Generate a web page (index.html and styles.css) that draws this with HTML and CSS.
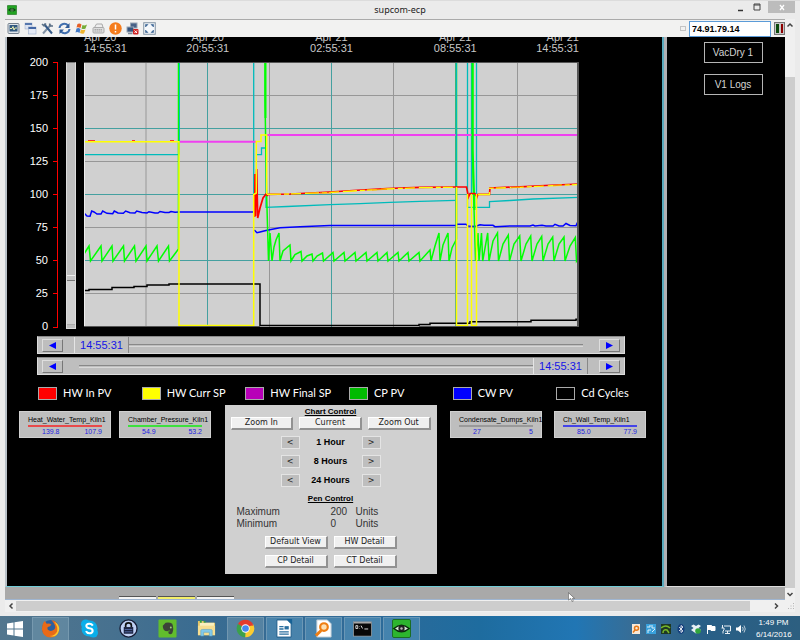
FILE: index.html
```html
<!DOCTYPE html>
<html lang="en">
<head>
<meta charset="utf-8">
<title>supcom-ecp</title>
<link rel="stylesheet" href="styles.css">
</head>
<body>
<div class="window">
  <header class="titlebar">
    <svg class="app-icon" viewBox="0 0 20 20"><rect x=".5" y=".5" width="19" height="19" rx="2" fill="#22a322" stroke="#2a5f2a"/><path d="M2 10Q10 2 18 10Q10 17 2 10Z" fill="#0d3d12"/><circle cx="10" cy="10" r="3" fill="#6dbb6d"/><circle cx="10" cy="10" r="1.3"/></svg>
    <h1>supcom-ecp</h1>
    <div class="window-buttons">
      <button aria-label="Minimize"><svg viewBox="0 0 10 10"><path d="M2 8.500H7" stroke="#333" stroke-width="1.500"/></svg></button>
      <button aria-label="Maximize"><svg viewBox="0 0 10 10"><path d="M2 2H8V8H2ZM2 3H8" fill="none" stroke="#444"/></svg></button>
      <button class="close" aria-label="Close"><svg viewBox="0 0 10 10"><path d="M3 3L7 8M7 3L3 8" stroke="#fff" stroke-width="1.300"/></svg></button>
    </div>
  </header>

  <div class="viewport">
    <main class="client">
      <div class="toolbar">
        <button aria-label="Monitor"><svg viewBox="0 0 26 26"><rect x="2" y="3" width="22" height="20" rx="2" fill="#dfe5ea" stroke="#75818e" stroke-width="2"/><rect x="5" y="6" width="16" height="13" fill="#31587f"/><path d="M6 13H10L12 9L14 16L16 12H20" fill="none" stroke="#e8edb0" stroke-width="2"/></svg></button>
        <button aria-label="Windows"><svg viewBox="0 0 26 26"><rect x="2" y="2" width="14" height="12" fill="#dbe3f1" stroke="#9aabc9"/><path d="M2 4H16" stroke="#5677ad" stroke-width="4"/><rect x="9" y="10" width="15" height="14" fill="#e5eaf5" stroke="#8ba0c4"/><path d="M9 12H24" stroke="#4569a5" stroke-width="4"/></svg></button>
        <button aria-label="Tools"><svg viewBox="0 0 26 26"><path d="M4 23L20 5" stroke="#8393a5" stroke-width="4"/><path d="M6 4L22 23" stroke="#355a88" stroke-width="4"/><path d="M2 4L6 8L10 3M17 3L18 8L24 8" fill="none" stroke="#5d7287" stroke-width="3"/></svg></button>
        <button aria-label="Refresh"><svg viewBox="0 0 26 26"><path d="M3 12C4 3 15 1 20 7M23 14C22 23 11 25 6 19" fill="none" stroke="#416fae" stroke-width="4"/><path d="M23 2V12H14ZM3 24V15H12Z" fill="#305b96"/></svg></button>
        <button aria-label="Start menu"><svg viewBox="0 0 26 26"><path d="M5 4Q9 2 13 5L11 12Q7 10 3 11Z" fill="#e55f26"/><path d="M15 6Q19 8 24 5L21 13Q17 15 13 13Z" fill="#76ac37"/><path d="M3 13Q7 11 11 14L9 22Q5 19 1 21Z" fill="#4279c5"/><path d="M12 15Q16 17 21 15L18 23Q14 24 10 22Z" fill="#eeb52e"/></svg></button>
        <button aria-label="Keyboard"><svg viewBox="0 0 26 26"><path d="M5 11L9 4H20L22 11" fill="#eee" stroke="#aaa" stroke-width="2"/><rect x="2" y="11" width="22" height="11" rx="2" fill="#ddd" stroke="#aaa" stroke-width="2"/><path d="M5 15H21M5 18H21" stroke="#aaa" stroke-width="2" stroke-dasharray="3 1"/></svg></button>
        <button aria-label="Alert"><svg viewBox="0 0 26 26"><circle cx="13" cy="13" r="12.500" fill="#f57c1c"/><path d="M13 5V15M13 18V21" stroke="#fff" stroke-width="3"/></svg></button>
        <button aria-label="Disconnect"><svg viewBox="0 0 26 26"><rect x="9" y="2" width="13" height="10" fill="#476187" stroke="#9aa6b5" stroke-width="2"/><rect x="2" y="10" width="13" height="10" fill="#36547e" stroke="#9aa6b5" stroke-width="2"/><path d="M4 23H13" stroke="#7c8999" stroke-width="3"/><rect x="14" y="14" width="11" height="11" rx="2" fill="#d02424"/><path d="M17 17L22 22M22 17L17 22" stroke="#fff" stroke-width="2"/></svg></button>
        <button aria-label="Full screen"><svg viewBox="0 0 26 26"><rect x="1.500" y="1.500" width="23" height="23" fill="#f5f8fb" stroke="#8192a2" stroke-width="2"/><path d="M5 5H10L5 10ZM21 5V10L16 5ZM5 21V16L10 21ZM21 21H16L21 16Z" fill="#315c8e" stroke="#315c8e"/></svg></button>
        <div class="address">
          <i class="grip"></i>
          <input type="text" value="74.91.79.14" aria-label="Address">
          <span class="status"><i></i><i class="off"></i></span>
        </div>
      </div>

      <div class="panes">
        <section class="chart-pane">
          <div class="time-axis">
            <span>Apr 20<br>14:55:31</span><span>Apr 20<br>20:55:31</span><span>Apr 21<br>02:55:31</span><span>Apr 21<br>08:55:31</span><span>Apr 21<br>14:55:31</span>
          </div>
          <div class="chart">
            <div class="value-axis">
              <div class="values"><span>200</span><span>175</span><span>150</span><span>125</span><span>100</span><span>75</span><span>50</span><span>25</span><span>0</span></div>
              <svg class="ticks" viewBox="0 0 9 266"><path d="M4 0H9V266H4V265H8V232H4V231H8V199H4V198H8V166H4V165H8V133H4V132H8V100H4V99H8V67H4V66H8V34H4V33H8V1H4Z" fill="#f00"/></svg>
            </div>
            <input class="range-y" type="range" min="0" max="100" value="82" aria-label="Value range">
            <svg class="plot" viewBox="84 62 495 265" preserveAspectRatio="none" role="img" aria-label="Kiln trend chart">
              <rect x="84" y="62" width="495" height="265" fill="#d0d0d0"/>
              <path d="M146 62V327" stroke="#b4b4b4" stroke-width="2"/>
              <path d="M269.500 62V327M393.500 62V327M517.500 62V327M84 95.500H579M84 161.500H579M84 227.500H579M84 293.500H579" stroke="#979797"/>
              <path d="M207.500 62V327M331.500 62V327M455.500 62V327M84 128.500H579M84 194.500H579M84 260.500H579" stroke="#45a0a0"/>
              <g fill="none">
                <path stroke="#000" stroke-width="1.500" d="M84 290.500H89V289.500H112V287.500H134V286.500H147V285H169V284H260V326M260 325.500H419V324.500H430V323.300H470V321.700H531V320.300H576V319.300H579"/>
                <path stroke="#0bb" stroke-width="1.300" d="M84 154.700H179.500M253.700 62V207M256 154.700H261.500V148H266V207.300L287 206.500L330 204.700L360 203.600L390 202.300L420 201.300L456 200.300M467.500 62V207.300M471.500 62V194M476.500 62V207M468 207.300H489.500V201.700L510 200.500L533 199L579 197.300"/>
                <path stroke="#f040f0" stroke-width="2" d="M179 141.700H256M267 135H579"/>
                <path stroke="#00f" stroke-width="1.500" d="M84 213L87 216L90 216.300L91.700 211L94 212L97 214H101L102.700 211L107 213.300L112.700 213.700L114.300 211L118 213L123.300 213.300L125.700 211L130 212.700L135 213L136.700 211L142 212.500L147 213L149 211.700L155 213H158L160 211.500L165 212.500H169L171 211.500L175 212.300L179 212H254M254.300 230L257 232.700L260 232L267 230.300L280 227.700L300 226.700L330 225.600H456L457 224.300H466L468 226L475 226.500L480 224.700L484 225.300H493L495 226.700L510 226L530 226L533 225L535 226L542 225.300L546 226H553L555 224.300L559 226H563L566 223.500L570 225.500L576 225.700L577 223.500L579 225"/>
                <path stroke="#0f0" stroke-width="1.500" d="M84 254L89 246L90.500 261L101 246L102 261L112 246L113 261L123.500 246L124.500 261L134.500 246L136 261L146 246L147 261L157 246L158.500 261L168.500 246L169.500 261L174 255L178.500 249V62M265 62V100L266.500 190L268.500 261L270 233L272 261L274 247L276 240L279 233L280 261L283 251L290 245L291 261L295 254.500L301 251.500L302 261L307 256L312 254L313 261L317 256L322.500 253L323.500 261L333 252.500L334 261L344 252.500L345 261L355 252.500L356 261L366 252.500L367 261L377 252.500L378 261L387 252.500L388 261L398 252.500L399 261L408 252.500L409 261L419 252.500L420 261L430 250L431 261L435 246L439 233L440 261L443 245L448 233L449 261L452 248L456.500 239V62M472.500 62V155L475.500 261L478 233L479 261L481.500 233L482.700 261L487.700 233L489 261L493 241L497.500 233L498.500 261L503 244L508.300 235L509.500 261L514 244L519.700 236L521 261L526 244L530.700 236L532 261L537 244L541.700 236.500L543 261L548 244L552.700 237L554 261L559 244L564 237L565 261L570 246L575.300 237.500L576.500 261L579 257"/>
                <path stroke="#0bb" d="M179.500 62V154M456.500 62V200"/>
                <path stroke="#0f0" stroke-width="2" d="M265.500 62V118M472.700 62V150L474.500 210"/>
                <path stroke="#f00" stroke-width="1.700" d="M88 141H95M132 141H135M170 141H174M254.700 217L255 174L255.500 216L256.700 169L257.700 218L260 208L263 198L266 194L268 196M267 194.300L290 194L330 192L353 190.500L387 188.500L420 187.300L456 187H466.500L468.500 197L470 193.500H475L477 197L478 194.300H489.500L490 188L520 186.800L545 185.500L579 184"/>
                <path stroke="#ff0" stroke-width="1.500" d="M84 141.700H179V325.500H253.700V194.500L256.300 193V141.500H261V135H266.700V194.300M456.500 187V325.500H467.500V194M471.500 194V325.500H476.500V194"/>
                <path stroke="#ff0" stroke-width="1.300" stroke-dasharray="14 3 5 2 10 4" d="M267 194.300L290 194L330 192.500L353 191L387 189L420 187.700L456 187.300M478 194.500H489.500V188.300L520 187.300L545 186L579 184.500"/>
                <path stroke="#ff9800" d="M372 190L387 189.300M511 187.500L520 187.300M553 185.700L562 185.200M320 193H331"/>
                <path stroke="#eee" d="M84.500 62V327"/>
                <path stroke="#555" d="M84 62.500H579M84 326.500H260M419 326.500H579"/>
                <path stroke="#555" stroke-width="2" d="M578 62V327"/>
              </g>
            </svg>
          </div>

          <div class="sliders">
            <div class="time-slider">
              <button aria-label="Start earlier"><svg viewBox="0 0 8 8"><path d="M8 0V8L0 4Z" fill="#00f"/></svg></button>
              <div class="track"><input type="range" value="0" id="start" aria-label="Start time"><output for="start">14:55:31</output></div>
              <button aria-label="Start later"><svg viewBox="0 0 8 8"><path d="M0 0V8L8 4Z" fill="#00f"/></svg></button>
            </div>
            <div class="time-slider">
              <button aria-label="End earlier"><svg viewBox="0 0 8 8"><path d="M8 0V8L0 4Z" fill="#00f"/></svg></button>
              <div class="track"><input type="range" value="100" id="end" aria-label="End time"><output class="at-end" for="end">14:55:31</output></div>
              <button aria-label="End later"><svg viewBox="0 0 8 8"><path d="M0 0V8L8 4Z" fill="#00f"/></svg></button>
            </div>
          </div>

          <ul class="legend">
            <li><i class="red"></i>HW In PV</li><li><i class="yellow"></i>HW Curr SP</li><li><i class="purple"></i>HW Final SP</li><li><i class="green"></i>CP PV</li><li><i class="blue"></i>CW PV</li><li><i></i>Cd Cycles</li>
          </ul>

          <div class="lower">
            <div class="sensors">
              <div class="sensor red-line"><h3>Heat_Water_Temp_Kiln1</h3><p><span>139.8</span><span>107.9</span></p></div>
              <div class="sensor green-line"><h3>Chamber_Pressure_Kiln1</h3><p><span>54.9</span><span>53.2</span></p></div>
            </div>
            <section class="control">
              <h2>Chart Control</h2>
              <div class="zoom-row"><button>Zoom In</button><button>Current</button><button>Zoom Out</button></div>
              <div class="steps">
                <button aria-label="Back 1 hour">&lt;</button><b>1 Hour</b><button aria-label="Forward 1 hour">&gt;</button>
                <button aria-label="Back 8 hours">&lt;</button><b>8 Hours</b><button aria-label="Forward 8 hours">&gt;</button>
                <button aria-label="Back 24 hours">&lt;</button><b>24 Hours</b><button aria-label="Forward 24 hours">&gt;</button>
              </div>
              <h2>Pen Control</h2>
              <div class="limits"><span>Maximum</span><span>200</span><span>Units</span><span>Minimum</span><span>0</span><span>Units</span></div>
              <div class="views"><button>Default View</button><button>HW Detail</button><button>CP Detail</button><button>CT Detail</button></div>
            </section>
            <div class="sensors right">
              <div class="sensor gray-line"><h3>Condensate_Dumps_Kiln1</h3><p><span>27</span><span>5</span></p></div>
              <div class="sensor blue-line"><h3>Ch_Wall_Temp_Kiln1</h3><p><span>85.0</span><span>77.9</span></p></div>
            </div>
          </div>
        </section>
        <aside class="side-pane"><button>VacDry 1</button><button>V1 Logs</button></aside>
      </div>
      <div class="strip"><i></i><i class="lit"></i><i></i></div>
    </main>
    <div class="scroll-y">
      <button aria-label="Scroll up"><svg viewBox="0 0 8 8"><path d="M1.500 5.500L4 3L6.500 5.500" fill="none" stroke="#444" stroke-width="1.500"/></svg></button>
      <i></i>
      <button aria-label="Scroll down"><svg viewBox="0 0 8 8"><path d="M1.500 3L4 5.500L6.500 3" fill="none" stroke="#444" stroke-width="1.500"/></svg></button>
    </div>
  </div>
  <div class="scroll-x">
    <button aria-label="Scroll left"><svg viewBox="0 0 8 8"><path d="M5.500 1.500L3 4L5.500 6.500" fill="none" stroke="#444" stroke-width="1.500"/></svg></button>
    <i></i>
    <button aria-label="Scroll right"><svg viewBox="0 0 8 8"><path d="M3 1.500L5.500 4L3 6.500" fill="none" stroke="#444" stroke-width="1.500"/></svg></button>
    <svg class="corner" viewBox="0 0 8 8"><path d="M6 1H7V2H6ZM3.500 3.500H4.500V4.500H3.500ZM6 3.500H7V4.500H6ZM1 6H2V7H1ZM3.500 6H4.500V7H3.500ZM6 6H7V7H6Z" fill="#b5b5b5"/></svg>
  </div>
  <svg class="pointer" viewBox="0 0 8 12"><path d="M.5 .5V9L3 7L5 11L6 10L5 7H7.500Z" fill="#fff" stroke="#444" stroke-width=".6"/></svg>
</div>

<footer class="taskbar">
  <button class="start" aria-label="Start"><svg viewBox="0 0 16 16"><path d="M0 2.500L6.500 1.500V7.500H0ZM7.500 1.300L16 0V7.500H7.500ZM0 8.500H6.500V14.500L0 13.500ZM7.500 8.500H16V16L7.500 14.700Z" fill="#fff"/></svg></button>
  <div class="apps">
    <button class="open" aria-label="Firefox"><svg viewBox="0 0 20 20"><circle cx="10" cy="10" r="9" fill="#2c5f9f"/><path d="M11 1Q19 3 19 11Q18 19 10 19.500Q2 19 1 11Q1 5 4 2L6 5Q9 4 11 6L9 8Q6 8 7 11Q10 14 14 11Q17 8 11 1Z" fill="#ea6a18"/><path d="M14 3Q18 8 17 13Q15 18 9 18Q17 20 19 12Q20 6 14 3Z" fill="#fbc62d"/></svg></button>
    <button aria-label="Skype"><svg viewBox="0 0 20 20"><circle cx="10" cy="10" r="8.500" fill="#0aaeea"/><circle cx="6" cy="5.500" r="5" fill="#0aaeea"/><circle cx="14" cy="14.500" r="5" fill="#0aaeea"/><path d="M13.500 7Q12 4.800 9.500 5Q6.500 5.200 6.700 7.500Q7 9.300 10 9.800Q13.500 10.300 13.300 12.700Q13 15 10 15Q7.300 15 6.300 12.800" fill="none" stroke="#fff" stroke-width="2.200"/></svg></button>
    <button aria-label="Password safe"><svg viewBox="0 0 20 20"><circle cx="10" cy="10" r="9" fill="#bfd0f4" stroke="#151b33" stroke-width="1.400"/><path d="M7 9V6.500Q7 4 10 4Q13 4 13 6.500V9" fill="none" stroke="#111" stroke-width="1.800"/><rect x="5" y="8.500" width="10" height="7" fill="#1b2340"/><path d="M6 11H14M6 13.500H14" stroke="#546aa5"/></svg></button>
    <button aria-label="Evernote"><svg viewBox="0 0 20 20"><rect x=".5" y=".5" width="19" height="19" rx="1" fill="#61bd2d"/><path d="M5 7L8 4Q12 3 15 5Q17 10 15 15Q13 17 11 15V13H13Q12 11 10 13Q5 13 5 7Z" fill="#3c4438"/><circle cx="13.500" cy="9" r="1" fill="#9fcf80"/></svg></button>
    <button aria-label="File Explorer"><svg viewBox="0 0 20 20"><path d="M1 2H7L9 4H19V17H1Z" fill="#e7c667"/><path d="M3 4H18V9H3Z" fill="#f9f0c0"/><path d="M1 7H19V17H1Z" fill="#f6de91"/><path d="M4 18V12Q4 11 6 11H14Q16 11 16 12V18H13V14H7V18Z" fill="#82c9ea" stroke="#559fc6" stroke-width=".6"/><path d="M4 1V4M8 2V4" stroke="#35a04b" stroke-width="2"/></svg></button>
    <button class="open" aria-label="Chrome"><svg viewBox="0 0 20 20"><path d="M10 10L2 5.200A9.300 9.300 0 0 1 18 5.400Z" fill="#e33b2e"/><path d="M10 10L18 5.400A9.300 9.300 0 0 1 9.600 19.300Z" fill="#fbcc30"/><path d="M10 10L9.600 19.300A9.300 9.300 0 0 1 2 5.200Z" fill="#3ba14b"/><path d="M10 5.600H18V7H10Z" fill="#e33b2e"/><circle cx="10" cy="10" r="4.400" fill="#fff"/><circle cx="10" cy="10" r="3.500" fill="#4688f1"/></svg></button>
    <button class="open lit" aria-label="Writer"><svg viewBox="0 0 20 20"><path d="M2 1H13L17 5V19H2Z" fill="#fff" stroke="#1a5b88"/><path d="M12 0H18V6Z" fill="#176296"/><path d="M4.500 8H9M4.500 10.500H9M4.500 13.500H14.500M4.500 16H14.500" stroke="#2a6f9f" stroke-width="1.400"/><path d="M10 7.500H14.500V11H10Z" fill="#2a6f9f"/></svg></button>
    <button class="open lit" aria-label="Document search"><svg viewBox="0 0 20 20"><path d="M3 1H14L18 5V19H3Z" fill="#fff" stroke="#b9c8d4"/><circle cx="10.500" cy="8.500" r="4" fill="#fbe0b5" stroke="#ef7e13" stroke-width="2.300"/><path d="M7.500 12L2 17.500" stroke="#ef7e13" stroke-width="3"/></svg></button>
    <button class="open lit" aria-label="Command prompt"><svg viewBox="0 0 20 20"><rect x=".5" y="3" width="19" height="15" fill="#080808" stroke="#aaa" stroke-width=".7"/><path d="M1 4H19" stroke="#bbb" stroke-width="1.400"/><path d="M3 7H5V10H3ZM7 7.500V8M7 9.500V10M8.500 7L10 10M12 10.500H16" fill="none" stroke="#ddd"/></svg></button>
    <button class="open lit" aria-label="supcom-ecp"><svg viewBox="0 0 20 20"><rect x=".5" y=".5" width="19" height="19" rx="1.500" fill="#2db52e" stroke="#1a6a20"/><path d="M2 10Q10 3 18 10Q10 17 2 10Z" fill="#d8ead8" stroke="#082a0b" stroke-width="1.500"/><circle cx="10" cy="10" r="3.300" fill="#222"/><circle cx="10" cy="10" r="1.300" fill="#bbb"/></svg></button>
  </div>
  <div class="tray">
    <svg viewBox="0 0 10 10"><rect x="1" y="0" width="8" height="10" fill="#f7e8d7"/><circle cx="5.500" cy="4.200" r="2" fill="none" stroke="#e57716" stroke-width="1.500"/><path d="M4 6L2 8.500" stroke="#e57716" stroke-width="1.500"/></svg>
    <svg viewBox="0 0 10 10"><rect width="10" height="10" fill="#39a1dc"/><path d="M1 3H4V1M6 1V4H9M2 9V6H5M6 8L9 5" fill="none" stroke="#dceffa"/></svg>
    <svg viewBox="0 0 10 10"><rect width="10" height="10" fill="#1e3822"/><path d="M0 4Q5 0 9 4M2 9Q2 5 6 6L8 9" fill="none" stroke="#76b82a" stroke-width="1.500"/></svg>
    <svg viewBox="0 0 10 10"><ellipse cx="5" cy="5" rx="3.500" ry="5" fill="#143f7d"/><path d="M3 3L7 7L5 8.500V1.500L7 3L3 7" fill="none" stroke="#fff" stroke-width=".8"/></svg>
    <svg viewBox="0 0 10 10"><path d="M0 2L2.500 .5L5 2L7.500 .5L10 2L7.500 4L10 6L5 9.500L0 6L2.500 4Z" fill="#e8f0f4"/><circle cx="7" cy="7" r="2.800" fill="#31a53c"/></svg>
    <svg viewBox="0 0 10 10"><path d="M1.500 1V10M2 1.500H5.500V2.500H9V6.500H5V5.500H2" fill="#fff" stroke="#fff"/></svg>
    <svg viewBox="0 0 10 10"><path d="M3 2H9.500V7H4M6.500 7V9M4 9.500H9M1.500 1V4M.5 4H3V6L2 7V9.500" fill="none" stroke="#e8eff4"/></svg>
    <svg viewBox="0 0 10 10"><path d="M0 3.500H2L5 1V9L2 6.500H0Z" fill="#fff"/><path d="M6.500 3Q8 5 6.500 7M8 1.500Q10.500 5 8 8.500" fill="none" stroke="#e0e8ee" stroke-width=".8"/></svg>
  </div>
  <time class="clock">1:49 PM<br>6/14/2016</time>
</footer>
</body>
</html>
```
FILE: styles.css
```css
* { box-sizing: border-box; }
body {
  margin: 0;
  min-height: 100vh;
  display: flex;
  flex-direction: column;
  background: #ebebeb;
  color: #000;
  font-family: "Liberation Sans", Arial, sans-serif;
  font-size: 11px;
}
button { margin: 0; padding: 0; border: 0; background: none; font: inherit; color: inherit; }
h1, h2, h3, p, ul { margin: 0; padding: 0; }
svg { display: block; }
i { display: block; }

.window { flex: 1; display: flex; flex-direction: column; padding: 0 5px 4px; position: relative; border-top: 1px solid #dcdcdc; }

.titlebar { display: grid; grid-template-columns: 1fr auto 1fr; height: 18px; align-items: center; }
.app-icon { width: 10px; height: 10px; margin-left: 2px; }
.titlebar h1 { font: 9px/18px "Noto Sans", sans-serif; color: #222; }
.window-buttons { display: flex; justify-self: end; align-self: start; gap: 6px; }
.window-buttons svg { width: 10px; height: 10px; margin: 1px auto; }
.window-buttons .close { width: 27px; height: 12px; background: #bcbcbc; }

.viewport { flex: 1; display: flex; }
.client { flex: 1; display: flex; flex-direction: column; min-width: 0; }
.toolbar { display: flex; align-items: center; gap: 4px; height: 18px; padding-left: 2px; background: #f2f2f1; border-top: 1px solid #aaa; }
.toolbar button svg { width: 13px; height: 13px; }
.address { display: flex; align-items: center; margin-left: auto; height: 17px; gap: 3px; }
.grip { width: 6px; height: 5px; border: 1px solid #c4c4c4; }
.address input { width: 82px; height: 16px; padding: 0 2px; border: 1px solid #5b9bd8; background: #fff; font: bold 9px "Liberation Sans", Arial, sans-serif; outline: 0; }
.status { display: flex; gap: 2px; width: 11px; height: 13px; overflow: hidden; padding: 1px; background: #c9c9c9; border: 1px solid #777; }
.status i { flex: 1; background: #0b4a0b; }
.status .off { background: #8d0000; }

.panes { flex: 1; display: flex; background: #000; }
.chart-pane { flex: 1; min-width: 0; border-left: 2px solid #b9c1c8; border-right: 2px solid #58a9bd; border-bottom: 1px solid #72cdd8; color: #fff; }
.side-pane { display: flex; flex-direction: column; align-items: center; gap: 11px; width: 121px; padding: 5px 0 0 14px; border-left: 3px solid #b0b0b4; border-bottom: 1px solid #ddd; }
.side-pane button { width: 59px; height: 21px; border: 1px solid #b5b5b5; color: #d4d4d4; font-size: 10px; }

.time-axis { display: grid; grid-template-columns: 1fr 2fr 2fr 2fr 1fr; align-content: end; height: 19px; overflow: hidden; padding: 0 83px 2px 77px; line-height: 11px; color: #c8c8c8; text-align: center; }
.time-axis span:first-child { text-align: left; }
.time-axis span:last-child { text-align: right; }

.chart { display: flex; align-items: flex-start; gap: 8px; padding-right: 83px; }
.value-axis { display: flex; gap: 1px; width: 51px; }
.values { flex: 1; display: flex; flex-direction: column; justify-content: space-between; height: 277px; line-height: 13px; text-align: right; }
.ticks { flex: none; width: 9px; height: 266px; margin-top: 6px; }
.plot { flex: 1; min-width: 0; height: 265px; margin-top: 6px; }
.range-y {
  appearance: none; writing-mode: vertical-lr; width: 10px; height: 267px; margin: 6px 0 0;
  border: 1px solid #ddd; border-top-color: #777;
  background: linear-gradient(#bebebe 218px, #d0d0d0 218px, #d0d0d0 261px, #999 261px, #bebebe 262px);
}
.range-y::-webkit-slider-thumb { appearance: none; width: 8px; height: 6px; background: #c4c4c4; border-top: 1px solid #eee; border-bottom: 1px solid #777; }

.sliders { display: grid; gap: 3px; margin: 3px 37px 0 30px; }
.time-slider { display: flex; align-items: center; gap: 11px; height: 18px; padding: 0 4px; background: #bebebe; border: 1px solid #ddd; border-top-color: #8a8a8a; }
.time-slider button { width: 21px; height: 13px; border: 1px solid #dedede; border-right-color: #777; border-bottom-color: #777; }
.time-slider svg { width: 7px; height: 7px; margin: 0 auto; }
.track { position: relative; flex: 1; }
.track input { appearance: none; display: block; width: 100%; height: 16px; margin: 0; background: linear-gradient(#888, #888) 5px 7px / calc(100% - 10px) 1px no-repeat, linear-gradient(#d8d8d8, #d8d8d8) 5px 9px / calc(100% - 10px) 1px no-repeat; }
.track input::-webkit-slider-thumb { appearance: none; width: 55px; height: 16px; background: #c0c0c0; border-left: 1px solid #e5e5e5; border-right: 1px solid #888; }
.track output { position: absolute; top: 0; left: 0; width: 55px; text-align: center; line-height: 17px; color: #1414e6; pointer-events: none; }
.track .at-end { left: auto; right: 0; }

.legend { display: grid; grid-template-columns: repeat(6, 1fr); margin: 10px 2px 0 31px; list-style: none; font: 11px/16px Lato, sans-serif; }
.legend li { display: flex; align-items: center; gap: 6px; white-space: nowrap; }
.legend i { width: 19px; height: 13px; border: 1px solid #aaa; }
.red { background: #f00; }
.yellow { background: #ff0; }
.purple { background: #b800b8; }
.green { background: #00ba00; }
.blue { background: #00f; }

.lower { display: flex; justify-content: space-between; align-items: flex-start; margin: 4px 16px 0 12px; padding-bottom: 12px; color: #000; }
.sensors { display: flex; gap: 8px; margin-top: 6px; }
.right { gap: 12px; }
.sensor { width: 92px; height: 27px; padding: 3px 8px 0 8px; background: #bebebe; border: 1px solid #d0d0d0; }
.sensor h3 { font-weight: normal; font-size: 7px; line-height: 9px; padding-bottom: 1px; border-bottom: 2px solid; white-space: nowrap; }
.sensor p { display: flex; justify-content: space-between; padding-left: 14px; color: #2222e0; font-size: 7px; line-height: 9px; }
.red-line h3 { border-color: #e84a4a; }
.green-line h3 { border-color: #3ee03e; }
.gray-line h3 { border-color: #999; }
.blue-line h3 { border-color: #4444e8; }

.control { width: 212px; padding: 1px 6px 6px; background: #d0d0d0; }
.control h2 { font-size: 8px; line-height: 11px; text-align: center; text-decoration: underline; }
.control button { font: 8px "DejaVu Sans", Verdana, sans-serif; color: #222; }
.zoom-row { display: grid; grid-template-columns: repeat(3, 1fr); gap: 6px; }
.zoom-row button, .views button { height: 13px; background: #f0f0f0; border: 1px solid #fff; border-right: 2px solid #929292; border-bottom: 2px solid #929292; line-height: 10px; }
.steps { display: grid; grid-template-columns: 19px 62px 19px; justify-content: center; align-items: center; row-gap: 6px; margin: 6px 0; text-align: center; font-size: 9px; line-height: 13px; }
.steps button { height: 13px; background: #bebebe; border: 1px solid #e4e4e4; line-height: 10px; }
.limits { display: grid; grid-template-columns: 94px 25px 1fr; padding-left: 6px; margin-top: 2px; font-size: 10px; line-height: 12px; color: #333; }
.views { display: grid; grid-template-columns: 63px 63px; justify-content: center; gap: 6px; margin-top: 6px; }

.strip { display: flex; align-items: flex-end; gap: 2px; height: 13px; padding-left: 114px; background: #a9a9a9; border-bottom: 1px solid #9fb5d0; }
.strip i { width: 37px; height: 3px; background: #f4f4f4; border-top: 1px solid #555; }
.strip .lit { background: #f5f06a; }

.scroll-y { display: flex; flex-direction: column; width: 10px; background: #f0f0f0; }
.scroll-y button { height: 12px; }
.scroll-y svg { width: 8px; height: 8px; margin: 0 auto; }
.scroll-y i { flex: 1; margin-top: 46px; background: #cdcdcd; }
.scroll-x { display: flex; align-items: center; height: 12px; background: #f0f0f0; }
.scroll-x button { width: 11px; }
.scroll-x svg { width: 8px; height: 8px; margin: 0 auto; }
.scroll-x i { flex: 1; height: 10px; margin-right: 20px; background: #cdcdcd; }
.scroll-x .corner { margin: 0 0 0 6px; }
.pointer { position: absolute; left: 568px; bottom: 13px; width: 7px; height: 11px; }

.taskbar { display: flex; align-items: center; height: 25px; padding-right: 9px; background: linear-gradient(90deg, #52768e 0, #47718f 14%, #3a6c91 25%, #2f6a98 45%, #1e6c9f 60%, #2176b4 72%, #3a6c92 80%, #285f87 88%, #2d5f80 100%); color: #fff; }
.start { width: 32px; }
.start svg { width: 16px; height: 16px; margin: 0 auto 0 7px; }
.apps { display: flex; gap: 2px; }
.apps button { width: 37px; height: 24px; }
.apps svg { width: 19px; height: 19px; margin: 0 auto; }
.apps .open { background: #7499b080; border: 1px solid #8eacbf80; }
.apps .lit { background: #5d9bc280; }
.tray { display: flex; gap: 5px; margin-left: auto; }
.tray svg { width: 10px; height: 10px; }
.clock { margin-left: 10px; width: 35px; font-size: 8px; line-height: 12px; text-align: center; white-space: nowrap; }
```
